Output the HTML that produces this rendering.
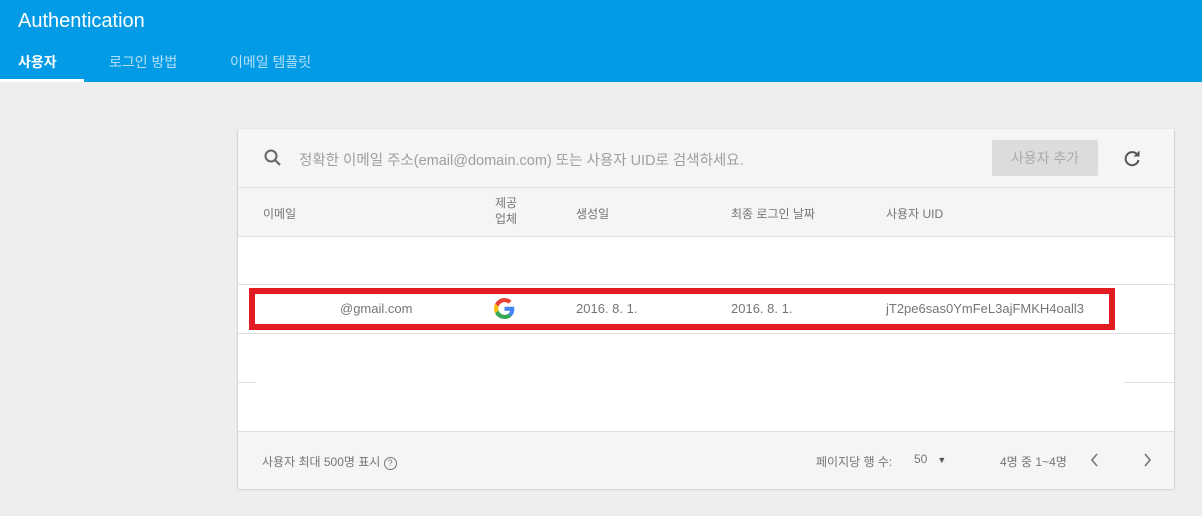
<!DOCTYPE html>
<html><head><meta charset="utf-8"><style>
body{margin:0;width:1202px;height:516px;background:#eeeeee;font-family:"Liberation Sans","Noto Sans CJK KR",sans-serif;position:relative;overflow:hidden}
.hdr{position:absolute;left:0;top:0;width:1202px;height:82px;background:#039be5;color:#fff}
.t{position:absolute;left:18px;top:10px;font-size:20px}
.tab{position:absolute;top:52px;font-size:14px}
.ul{position:absolute;left:0;top:79px;width:84px;height:3px;background:#fff}
.card{position:absolute;left:238px;top:129px;width:936px;height:359px;background:#fff;box-shadow:0 1px 2px rgba(0,0,0,.3)}
.a{position:absolute;font-size:12px;color:#757575}
.line{position:absolute;left:0;width:936px;height:1px;background:#e0e0e0}
</style></head><body>
<div class="hdr"><div class="t">Authentication</div>
<div class="tab" style="left:18px;font-weight:bold">사용자</div>
<div class="tab" style="left:109px;color:#b3e0f7">로그인 방법</div>
<div class="tab" style="left:230px;color:#b3e0f7">이메일 템플릿</div>
<div class="ul"></div></div>
<div class="card">
<div style="position:absolute;left:0;top:0;width:936px;height:107px;background:#f5f5f5"></div>
<div class="line" style="top:58px"></div><div class="line" style="top:107px"></div>
<div class="line" style="top:155px"></div><div class="line" style="top:204px"></div>
<div class="line" style="top:253px;left:0;width:18px"></div><div class="line" style="top:253px;left:886px;width:50px"></div>
<div style="position:absolute;left:0;top:302px;width:936px;height:57px;background:#f5f5f5;border-top:1px solid #e0e0e0"></div>
<svg style="position:absolute;left:25px;top:19px" width="20" height="20" viewBox="0 0 20 20"><circle cx="8" cy="8" r="5.5" fill="none" stroke="#666" stroke-width="2"/><path d="M12 12l5 5" stroke="#666" stroke-width="2.2"/></svg>
<div class="a" style="left:61px;top:20px;font-size:14.5px;color:#9e9e9e">정확한 이메일 주소(email@domain.com) 또는 사용자 UID로 검색하세요.</div>
<div style="position:absolute;left:754px;top:11px;width:106px;height:36px;background:#dcdcdc;color:#aaa;font-size:14px;text-align:center;line-height:36px;border-radius:2px">사용자 추가</div>
<svg style="position:absolute;left:884px;top:19px" width="20" height="20" viewBox="0 0 20 20"><path d="M15.5 7A6.5 6.5 0 1 0 16.5 12" fill="none" stroke="#555" stroke-width="2"/><path d="M17.5 2.5v6h-6z" fill="#555"/></svg>
<div class="a" style="left:25px;top:76px">이메일</div>
<div class="a" style="left:257px;top:66px;line-height:16px">제공<br>업체</div>
<div class="a" style="left:338px;top:76px">생성일</div>
<div class="a" style="left:493px;top:76px">최종 로그인 날짜</div>
<div class="a" style="left:648px;top:76px">사용자 UID</div>
<div style="position:absolute;left:11px;top:159px;width:854px;height:30px;border:6px solid #e31c24;background:#fff"></div>
<div class="a" style="left:102px;top:172px;font-size:13px">@gmail.com</div>
<svg style="position:absolute;left:256px;top:169px" width="21" height="21" viewBox="0 0 48 48"><path fill="#EA4335" d="M24 9.5c3.5 0 6.7 1.2 9.2 3.6l6.9-6.9C35.9 2.4 30.5 0 24 0 14.6 0 6.6 5.4 2.6 13.3l8 6.2C12.5 13.7 17.8 9.5 24 9.5z"/><path fill="#4285F4" d="M46.5 24.5c0-1.6-.1-3.1-.4-4.5H24v9h12.7c-.6 2.900-2.2 5.4-4.7 7.1l7.7 6c4.5-4.2 6.8-10.4 6.8-17.6z"/><path fill="#FBBC05" d="M10.5 28.6c-.5-1.4-.8-3-.8-4.6s.3-3.2.8-4.6l-8-6.2C.9 16.5 0 20.1 0 24s.9 7.5 2.6 10.8l7.9-6.2z"/><path fill="#34A853" d="M24 48c6.5 0 11.9-2.1 15.9-5.8l-7.7-6c-2.2 1.5-5 2.3-8.2 2.3-6.2 0-11.5-4.2-13.4-9.9l-8 6.2C6.6 42.6 14.6 48 24 48z"/></svg>
<div class="a" style="left:338px;top:172px;font-size:13px">2016. 8. 1.</div>
<div class="a" style="left:493px;top:172px;font-size:13px">2016. 8. 1.</div>
<div class="a" style="left:648px;top:172px;font-size:13px">jT2pe6sas0YmFeL3ajFMKH4oall3</div>
<div class="a" style="left:24px;top:324px">사용자 최대 500명 표시 <span style="display:inline-block;width:11px;height:11px;border:1.5px solid #777;border-radius:50%;font-size:9px;text-align:center;line-height:11px">?</span></div>
<div class="a" style="left:578px;top:324px">페이지당 행 수:</div>
<div class="a" style="left:676px;top:323px">50 &nbsp;&nbsp;<span style="font-size:9px;color:#555">▼</span></div>
<div class="a" style="left:762px;top:324px">4명 중 1~4명</div>
<svg style="position:absolute;left:852px;top:324px" width="10" height="14" viewBox="0 0 10 14"><path d="M7 1L2 7l5 6" fill="none" stroke="#777" stroke-width="1.6"/></svg>
<svg style="position:absolute;left:904px;top:324px" width="10" height="14" viewBox="0 0 10 14"><path d="M3 1l5 6-5 6" fill="none" stroke="#777" stroke-width="1.6"/></svg>
</div>
</body></html>
